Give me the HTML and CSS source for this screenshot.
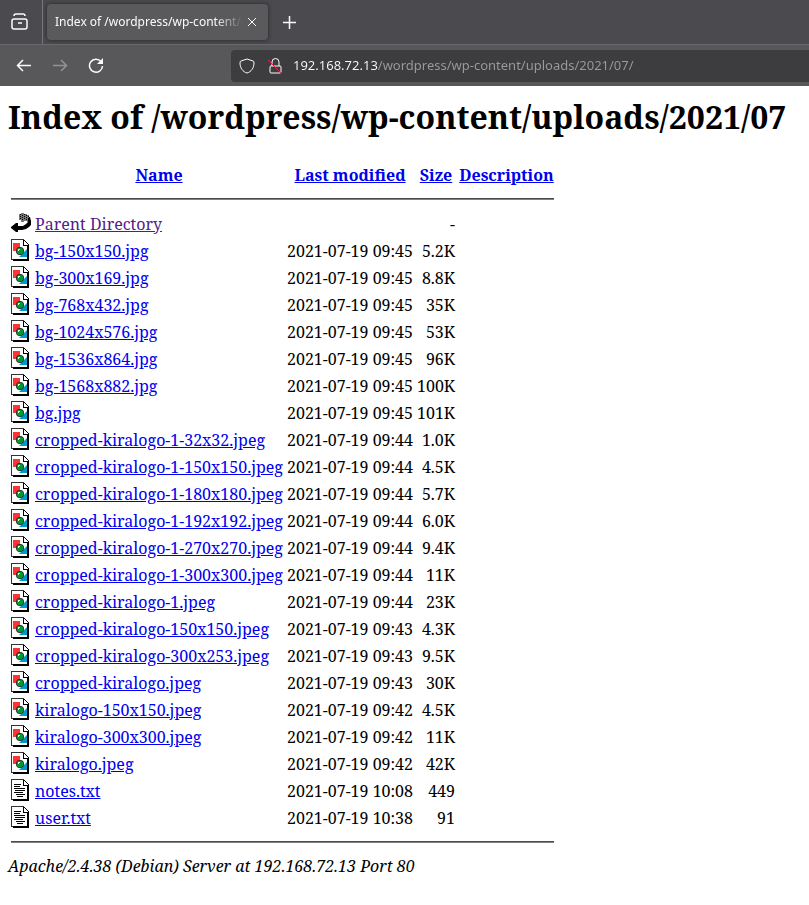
FILE: index.html
```html
<!DOCTYPE html>
<html lang="en">

<head>
    <meta charset="UTF-8">
    <meta name="viewport" content="width=device-width, initial-scale=1.0">
    <title>Index of /wordpress/wp-content/uploads/2021/07</title>
    <link rel="stylesheet" href="styles.css">
</head>

<body>
    <svg class="sprite" aria-hidden="true">
        <symbol id="back" viewBox="0 0 20 22">
            <path d="M8 2h2V1h3v1h3v1h2v3h1v4h-3V9h-3v1h-3V8H8z" fill="#777" />
            <path d="M9 2h1v1H9zM11 3h1v1h-1zM13 2h1v1h-1zM15 3h1v1h-1zM17 4h1v1h-1zM9 4h1v1H9zM11 5h1v1h-1zM13 4h1v1h-1zM15 5h1v1h-1zM9 6h1v1H9zM11 7h1v1h-1zM13 6h1v1h-1zM15 7h1v1h-1zM17 6h1v3h-1z" fill="#000" />
            <path d="M18 5h1l1 4v4l-2 2-3 2-4 1H7v2H5l-5-4v-1l5-4h2v3h5l3-2 2-2z" fill="#000" />
        </symbol>
        <symbol id="page" viewBox="0 0 20 22">
            <path d="M1 1h11v5h5v14H1z" fill="#fff" />
            <path d="M0 0h13v1H1v19h16v1H0z" fill="#333" />
            <path d="M12 1h1v5h5v15h-1V7h-5z" fill="#000" />
            <path d="M13 1l5 5" fill="none" stroke="#000" />
            <path d="M2 20h16v2H2zM16 7h2v15h-2z" fill="#000" />
        </symbol>
        <symbol id="image" viewBox="0 0 20 22">
            <use href="#page" />
            <path d="M2 4h7v8H2z" fill="#f33" />
            <path d="M16 10v8H8z" fill="#09c" />
            <circle cx="9" cy="12" r="4" fill="#222" />
            <circle cx="9" cy="12" r="3.3" fill="#093" />
            <path d="M7 10h2v1H8v1H7z" fill="#cfc" />
        </symbol>
        <symbol id="text" viewBox="0 0 20 22">
            <use href="#page" />
            <path d="M3 5h7v1H3zM3 7h6v1H3zM3 9h11v1H3zM4 11h10v1H4zM3 13h9v1H3zM5 15h9v1H5zM6 17h6v1H6z" fill="#000" />
        </symbol>
    </svg>

    <header class="browser">
        <div class="tabs">
            <button class="view" aria-label="Recent browsing">
                <svg class="bold" width="18" height="18" viewBox="0 0 18 18"><rect x="1" y="6" width="15" height="10" rx="2" /><path d="M3 3q0-2 2-2h7q2 0 2 2M7 10h4" /></svg>
            </button>
            <div class="tab">
                <span class="tab-title">Index of /wordpress/wp-content/uploads</span>
                <button aria-label="Close tab">
                    <svg width="10" height="10" viewBox="0 0 10 10"><path d="M1 1l8 8M9 1l-8 8" /></svg>
                </button>
            </div>
            <button class="new-tab" aria-label="New tab">
                <svg class="bold" width="13" height="13" viewBox="0 0 13 13"><path d="M6.5 0v13M0 6.5h13" /></svg>
            </button>
        </div>
        <div class="toolbar">
            <button aria-label="Back">
                <svg class="bold" width="16" height="16" viewBox="0 0 16 16"><path d="M15 7.5H2M7 2L1.500 7.500 7 13" /></svg>
            </button>
            <button class="off" aria-label="Forward" disabled>
                <svg class="bold" width="16" height="16" viewBox="0 0 16 16"><path d="M1 7.5h13M9 2l5.500 5.500L9 13" /></svg>
            </button>
            <button aria-label="Reload">
                <svg class="bold" width="16" height="16" viewBox="0 0 16 16"><path d="M13 3.500A6.500 6.500 0 1 0 14.500 8" /><path d="M15 0v6H9z" fill="#fbfbfe" stroke="none" /></svg>
            </button>
            <div class="urlbar">
                <svg width="16" height="16" viewBox="0 0 16 16"><path d="M8 1l6 2q1 0 1 2c0 5-3 9-7 10C4 14 1 10 1 5q0-2 1-2z" /></svg>
                <svg width="16" height="16" viewBox="0 0 16 16"><rect x="3" y="8" width="11" height="7" rx="1" /><path d="M5 8V4a3 3 0 0 1 7 0v4" /><path d="M1 2l13 13" stroke="#e22850" /></svg>
                <input class="url" type="text" aria-label="Address" value="192.168.72.13/wordpress/wp-content/uploads/2021/07/">
            </div>
        </div>
    </header>

    <main>
        <h1>Index of /wordpress/wp-content/uploads/2021/07</h1>
        <table>
            <colgroup>
                <col class="c-icon">
                <col class="c-name">
                <col class="c-date">
                <col class="c-size">
                <col class="c-desc">
            </colgroup>
            <tr><th></th><th><a href="?C=N;O=D">Name</a></th><th><a href="?C=M;O=A">Last modified</a></th><th><a href="?C=S;O=A">Size</a></th><th><a href="?C=D;O=A">Description</a></th></tr>
            <tr class="line"><td colspan="5"><hr></td></tr>
            <tr><td><svg class="icon"><use href="#back" /></svg></td><td><a class="seen" href="/wordpress/wp-content/uploads/2021/">Parent Directory</a></td><td></td><td>-</td><td></td></tr>
            <tr><td><svg class="icon"><use href="#image" /></svg></td><td><a href="bg-150x150.jpg">bg-150x150.jpg</a></td><td>2021-07-19 09:45</td><td>5.2K</td><td></td></tr>
            <tr><td><svg class="icon"><use href="#image" /></svg></td><td><a href="bg-300x169.jpg">bg-300x169.jpg</a></td><td>2021-07-19 09:45</td><td>8.8K</td><td></td></tr>
            <tr><td><svg class="icon"><use href="#image" /></svg></td><td><a href="bg-768x432.jpg">bg-768x432.jpg</a></td><td>2021-07-19 09:45</td><td>35K</td><td></td></tr>
            <tr><td><svg class="icon"><use href="#image" /></svg></td><td><a href="bg-1024x576.jpg">bg-1024x576.jpg</a></td><td>2021-07-19 09:45</td><td>53K</td><td></td></tr>
            <tr><td><svg class="icon"><use href="#image" /></svg></td><td><a href="bg-1536x864.jpg">bg-1536x864.jpg</a></td><td>2021-07-19 09:45</td><td>96K</td><td></td></tr>
            <tr><td><svg class="icon"><use href="#image" /></svg></td><td><a href="bg-1568x882.jpg">bg-1568x882.jpg</a></td><td>2021-07-19 09:45</td><td>100K</td><td></td></tr>
            <tr><td><svg class="icon"><use href="#image" /></svg></td><td><a href="bg.jpg">bg.jpg</a></td><td>2021-07-19 09:45</td><td>101K</td><td></td></tr>
            <tr><td><svg class="icon"><use href="#image" /></svg></td><td><a href="cropped-kiralogo-1-32x32.jpeg">cropped-kiralogo-1-32x32.jpeg</a></td><td>2021-07-19 09:44</td><td>1.0K</td><td></td></tr>
            <tr><td><svg class="icon"><use href="#image" /></svg></td><td><a href="cropped-kiralogo-1-150x150.jpeg">cropped-kiralogo-1-150x150.jpeg</a></td><td>2021-07-19 09:44</td><td>4.5K</td><td></td></tr>
            <tr><td><svg class="icon"><use href="#image" /></svg></td><td><a href="cropped-kiralogo-1-180x180.jpeg">cropped-kiralogo-1-180x180.jpeg</a></td><td>2021-07-19 09:44</td><td>5.7K</td><td></td></tr>
            <tr><td><svg class="icon"><use href="#image" /></svg></td><td><a href="cropped-kiralogo-1-192x192.jpeg">cropped-kiralogo-1-192x192.jpeg</a></td><td>2021-07-19 09:44</td><td>6.0K</td><td></td></tr>
            <tr><td><svg class="icon"><use href="#image" /></svg></td><td><a href="cropped-kiralogo-1-270x270.jpeg">cropped-kiralogo-1-270x270.jpeg</a></td><td>2021-07-19 09:44</td><td>9.4K</td><td></td></tr>
            <tr><td><svg class="icon"><use href="#image" /></svg></td><td><a href="cropped-kiralogo-1-300x300.jpeg">cropped-kiralogo-1-300x300.jpeg</a></td><td>2021-07-19 09:44</td><td>11K</td><td></td></tr>
            <tr><td><svg class="icon"><use href="#image" /></svg></td><td><a href="cropped-kiralogo-1.jpeg">cropped-kiralogo-1.jpeg</a></td><td>2021-07-19 09:44</td><td>23K</td><td></td></tr>
            <tr><td><svg class="icon"><use href="#image" /></svg></td><td><a href="cropped-kiralogo-150x150.jpeg">cropped-kiralogo-150x150.jpeg</a></td><td>2021-07-19 09:43</td><td>4.3K</td><td></td></tr>
            <tr><td><svg class="icon"><use href="#image" /></svg></td><td><a href="cropped-kiralogo-300x253.jpeg">cropped-kiralogo-300x253.jpeg</a></td><td>2021-07-19 09:43</td><td>9.5K</td><td></td></tr>
            <tr><td><svg class="icon"><use href="#image" /></svg></td><td><a href="cropped-kiralogo.jpeg">cropped-kiralogo.jpeg</a></td><td>2021-07-19 09:43</td><td>30K</td><td></td></tr>
            <tr><td><svg class="icon"><use href="#image" /></svg></td><td><a href="kiralogo-150x150.jpeg">kiralogo-150x150.jpeg</a></td><td>2021-07-19 09:42</td><td>4.5K</td><td></td></tr>
            <tr><td><svg class="icon"><use href="#image" /></svg></td><td><a href="kiralogo-300x300.jpeg">kiralogo-300x300.jpeg</a></td><td>2021-07-19 09:42</td><td>11K</td><td></td></tr>
            <tr><td><svg class="icon"><use href="#image" /></svg></td><td><a href="kiralogo.jpeg">kiralogo.jpeg</a></td><td>2021-07-19 09:42</td><td>42K</td><td></td></tr>
            <tr><td><svg class="icon"><use href="#text" /></svg></td><td><a href="notes.txt">notes.txt</a></td><td>2021-07-19 10:08</td><td>449</td><td></td></tr>
            <tr><td><svg class="icon"><use href="#text" /></svg></td><td><a href="user.txt">user.txt</a></td><td>2021-07-19 10:38</td><td>91</td><td></td></tr>
            <tr class="line"><td colspan="5"><hr></td></tr>
        </table>
        <address>Apache/2.4.38 (Debian) Server at 192.168.72.13 Port 80</address>
    </main>
</body>

</html>
```

FILE: styles.css
```css
* {
    margin: 0;
    padding: 0;
    box-sizing: border-box;
}

body {
    background-color: #fff;
    color: #000;
    font-family: "Noto Serif", "Liberation Serif", serif;
    font-size: 16px;
    line-height: 22px;
}

.sprite {
    display: none;
}

/* browser window */
.browser {
    color: #fbfbfe;
    font-family: "Noto Sans", sans-serif;
    font-size: 13px;
}

.browser svg {
    display: block;
    flex-shrink: 0;
    fill: none;
    stroke: currentColor;
}

.browser .bold {
    stroke-width: 1.5;
}

.browser button {
    display: flex;
    align-items: center;
    justify-content: center;
    border: none;
    background: none;
    color: inherit;
}

.tabs {
    display: flex;
    align-items: center;
    height: 44px;
    background-color: #4a4a4f;
}

.browser .view {
    width: 43px;
    height: 44px;
    padding-right: 2px;
    border-right: 1px solid #77777b;
}

.tab {
    display: flex;
    align-items: center;
    gap: 4px;
    width: 221px;
    height: 36px;
    margin-left: 4px;
    padding: 0 11px 0 8px;
    border-radius: 4px;
    background-color: #5a5a5c;
    box-shadow: 0 0 4px rgba(0, 0, 0, 0.5);
    font-size: 12px;
}

.tab-title {
    flex: 1;
    overflow: hidden;
    white-space: nowrap;
    mask-image: linear-gradient(to left, transparent, #000 28px);
}

.new-tab {
    width: 42px;
    height: 36px;
}

.toolbar {
    display: flex;
    align-items: center;
    height: 42px;
    padding-left: 6px;
    border-top: 1px solid #6a6a6c;
    background-color: #58585a;
}

.toolbar button {
    width: 36px;
    height: 32px;
}

.toolbar .off {
    color: #929294;
}

.urlbar {
    display: flex;
    align-items: center;
    flex: 1;
    gap: 12px;
    height: 32px;
    margin-left: 117px;
    padding-left: 8px;
    border-radius: 4px 0 0 4px;
    background-color: #3d3d3f;
}

.url {
    flex: 1;
    min-width: 0;
    height: 24px;
    margin-left: -2px;
    padding-bottom: 2px;
    border: none;
    outline: none;
    /* host is bright, path is dimmed */
    background: linear-gradient(to right, #fbfbfe 85px, #9b9b9d 85px);
    background-clip: text;
    color: transparent;
    font-family: inherit;
    font-size: 13px;
}

/* listing */
main {
    padding: 9px 8px;
}

h1 {
    margin-bottom: 21px;
    font-size: 32px;
    line-height: 44px;
}

table {
    width: 547px;
    margin-bottom: 1px;
    table-layout: fixed;
    border-spacing: 2px;
}

.c-icon {
    width: 22px;
}

.c-name {
    width: 250px;
}

.c-date {
    width: 128px;
}

.c-size {
    width: 40px;
}

.c-desc {
    width: 97px;
}

th,
td {
    height: 25px;
    padding: 1px;
    white-space: nowrap;
}

td:nth-child(1) {
    vertical-align: top;
}

td:nth-child(3),
td:nth-child(4) {
    text-align: right;
}

.line td {
    height: 20px;
}

hr {
    height: 2px;
    margin: 8px 0;
    border: none;
    border-top: 1px solid #4c4c4c;
    background-color: #808080;
}

.icon {
    display: block;
    width: 20px;
    height: 22px;
}

a {
    color: #0000ee;
}

.seen {
    color: #551a8b;
}
```
